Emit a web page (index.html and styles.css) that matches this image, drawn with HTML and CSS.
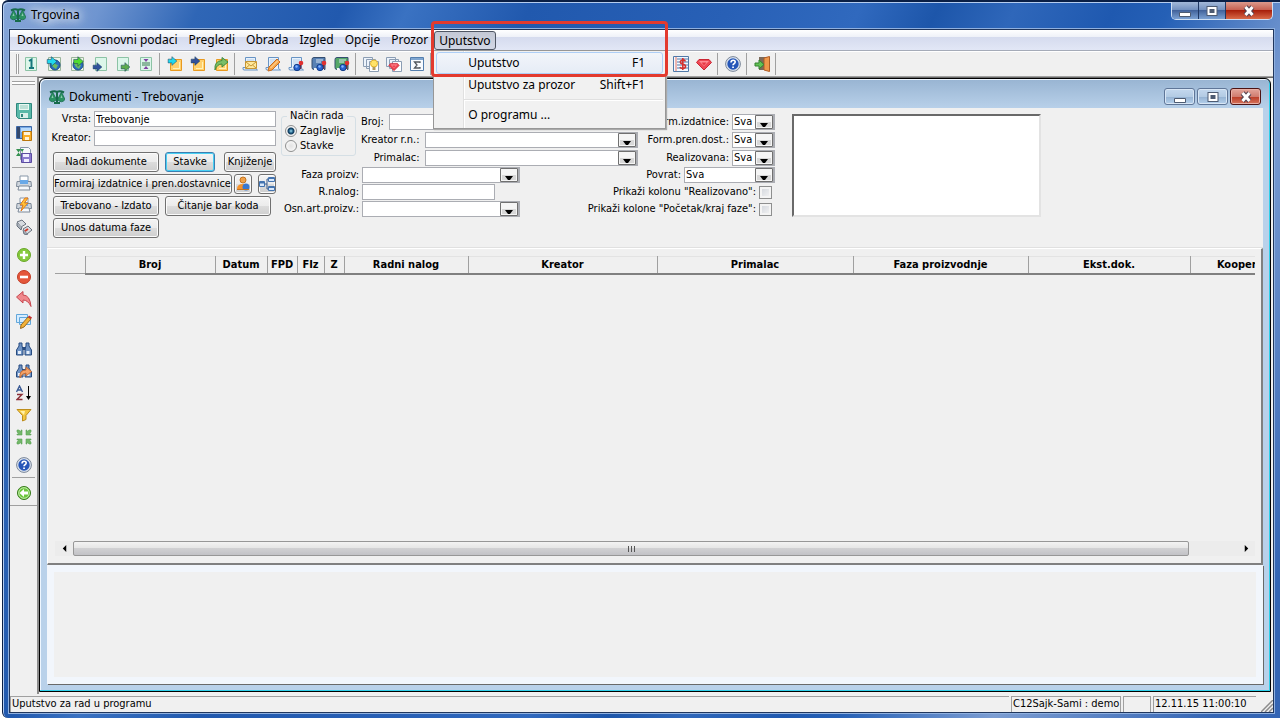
FILE: index.html
```html
<!DOCTYPE html>
<html lang="sr-Latn">
<head>
    <meta charset="UTF-8">
    <title>Trgovina</title>
    <link rel="stylesheet" href="styles.css">
</head>
<body>
<!-- shared icons -->
<svg class="defs" width="0" height="0">
    <symbol id="logo" viewBox="0 0 16 14">
        <path d="M1 2.500Q5 .5 8 2q3-1.500 7 .5M8 1v12M5 13h6" fill="none" stroke="#176b4b" stroke-width="2"/>
        <path d="M0 9.500L3.500 2L7.500 9.500Q3.500 14 0 9.500zM8.500 9.500L12.500 2L16 9.500Q12.500 14 8.500 9.500z" fill="#2a9262" stroke="#176b4b" stroke-width=".8"/>
        <path d="M3.500 5L2.500 8h2zM12.500 5L11.500 8h2z" fill="#8ccbb0"/>
    </symbol>
    <symbol id="floppy" viewBox="0 0 16 16">
        <path d="M.5 .5h15v15h-13l-2-2z" fill="#58b8a8" stroke="#31877e"/>
        <path d="M3 1h10v6H3z" fill="#e8f8f2"/><path d="M4 3h8M4 5h8" stroke="#8fc8bb"/>
        <path d="M4 10h8v5H4z" fill="#d9efea"/><path d="M5 11h2v3H5z" fill="#31877e"/>
    </symbol>
    <symbol id="page" viewBox="0 0 16 16">
        <path d="M2.500 1.500h11v13h-11z" fill="#effbf4" stroke="#8cc3a5"/>
        <path d="M3 2h10v12H3z" fill="#dcf6ea"/>
    </symbol>
    <symbol id="globe" viewBox="0 0 16 16">
        <path d="M2.500 1.500h12v13h-12z" fill="#edf5e8" stroke="#9cb59c"/>
        <circle cx="9" cy="9" r="5" fill="#2b6fc0" stroke="#194b86"/>
        <path d="M5 8q3-4 5-2l-1 2 3 1-2 4-3-2z" fill="#6cbc62"/>
    </symbol>
    <symbol id="right" viewBox="0 0 16 16">
        <path d="M1 5h6V1l8 7-8 7v-4H1z" fill="currentColor" stroke="#173c5c" stroke-width=".8"/>
    </symbol>
    <symbol id="note" viewBox="0 0 16 16">
        <path d="M3.500 3.500h11v11h-11z" fill="#ffd06c" stroke="#e89a20"/>
        <path d="M6 12.500h7M12.500 6v7" stroke="#fff1b8"/>
    </symbol>
    <symbol id="sheet" viewBox="0 0 16 16">
        <path d="M3.500 1.500h10v11l2 1.500H2Q.5 14 1 11.500h2.500z" fill="#e7f1fc" stroke="#6894c4"/>
        <path d="M5 4h7M5 6h7M5 8h5" stroke="#b4cfe9"/>
    </symbol>
    <symbol id="book" viewBox="0 0 16 16">
        <path d="M3 1.500h11v12H3q-2 0-2-2v-8q0-2 2-2z" fill="currentColor" stroke="#344e70"/>
        <path d="M3 12h10v2H3z" fill="#f2f5f7"/><path d="M5 4h7M5 6h5" stroke="#d8e4f0"/>
    </symbol>
    <symbol id="person" viewBox="0 0 16 16">
        <circle cx="13" cy="7" r="2.300" fill="#e03030"/><path d="M12.500 9v4" stroke="#902020" stroke-width="1.500"/>
        <circle cx="9" cy="11.500" r="3.200" fill="#2862cf" stroke="#143e88"/><circle cx="8.500" cy="10.500" r="1.200" fill="#86b8ff"/>
    </symbol>
    <symbol id="pencil" viewBox="0 0 16 16">
        <path d="M4 11L12 3l3 3-8 8-4 1z" fill="#f6a84c" stroke="#c96b1c"/><path d="M5.500 12L13 4.500" stroke="#ffe1ae"/>
    </symbol>
    <symbol id="pages" viewBox="0 0 16 16">
        <path d="M.5 1.500h9v9h-9zM3.500 3.500h9v9h-9z" fill="#edf3fb" stroke="#8b9db3"/>
        <path d="M6.500 5.500h9v10h-9z" fill="#fff" stroke="#8b9db3"/>
    </symbol>
    <symbol id="gem" viewBox="0 0 16 16">
        <path d="M3 3.500h10l2.500 3L8 14 .5 6.500z" fill="#ed4854" stroke="#cb2634"/>
        <path d="M3 5h10L8 10z" fill="#ff8d94"/><path d="M5.500 6.500h5L8 9.500z" fill="#e63844"/>
    </symbol>
    <symbol id="help" viewBox="0 0 16 16">
        <circle cx="8" cy="8" r="7.400" fill="#dce4ef" stroke="#7a8698"/>
        <circle cx="8" cy="8" r="5.700" fill="#2656b8"/>
        <path d="M6 6.500q0-2.300 2.200-2.300 2 0 2 1.800 0 1-1.200 1.700-1 .6-1 1.600" fill="none" stroke="#fff" stroke-width="1.600"/>
        <path d="M7.200 10.500h1.700v1.600H7.200z" fill="#fff"/>
    </symbol>
    <symbol id="printer" viewBox="0 0 16 16">
        <path d="M4 1h8v6H4z" fill="#fff" stroke="#8797a8"/>
        <path d="M1 6.500h14l.5 5h-15z" fill="#cfd6de" stroke="#7d8998"/>
        <path d="M4 5h8v4H4z" fill="#69a9e8"/><path d="M3 11h10l1 4H2z" fill="#f5f8fb" stroke="#7d8998"/>
    </symbol>
    <symbol id="binoculars" viewBox="0 0 16 16">
        <path d="M3 2h3v3l1 3v6H.5V9L3 5zM10 2h3v3l2.500 4v5H9V8l1-3z" fill="#6f93c4" stroke="#274b80"/>
        <path d="M6.500 6h3v3h-3z" fill="#274b80"/><path d="M2 10h3v3H2zM10.500 10h3v3h-3z" fill="#e4eefb"/>
    </symbol>
    <symbol id="glyph-min" viewBox="0 0 14 12">
        <path d="M1.500 7.500h11v4h-11z" fill="#fff" stroke="#4d5b72"/>
    </symbol>
    <symbol id="glyph-max" viewBox="0 0 14 12">
        <path d="M2.500 2h9v8h-9z" fill="#4d5b72" stroke="#4d5b72" stroke-width="2"/>
        <path d="M3.500 3h7v6h-7z" fill="none" stroke="#fff" stroke-width="2"/>
    </symbol>
    <symbol id="glyph-close" viewBox="0 0 14 12">
        <path d="M3.500 2l7 8M10.500 2l-7 8" stroke="#54414e" stroke-width="5"/>
        <path d="M3.500 2l7 8M10.500 2l-7 8" stroke="#fff" stroke-width="3"/>
    </symbol>
</svg>

<div class="window">
    <header class="titlebar">
        <svg class="logo"><use href="#logo"/></svg>
        <h1>Trgovina</h1>
        <div class="winbuttons">
            <button aria-label="Minimize"><svg><use href="#glyph-min"/></svg></button>
            <button aria-label="Maximize"><svg><use href="#glyph-max"/></svg></button>
            <button class="close" aria-label="Close"><svg><use href="#glyph-close"/></svg></button>
        </div>
    </header>

    <div class="client">
        <nav class="menubar">
            <button>Dokumenti</button>
            <button>Osnovni podaci</button>
            <button>Pregledi</button>
            <button>Obrada</button>
            <button>Izgled</button>
            <button>Opcije</button>
            <button>Prozor</button>
            <div class="menu-open">
                <button class="active">Uputstvo</button>
                <div class="dropdown">
                    <button class="hot"><span>Uputstvo</span><span>F1</span></button>
                    <button><span>Uputstvo za prozor</span><span>Shift+F1</span></button>
                    <hr>
                    <button><span>O programu ...</span></button>
                </div>
                <div class="marker"></div>
            </div>
        </nav>

        <div class="toolbar">
            <div class="grip"></div>
            <div class="group">
                <button><svg viewBox="0 0 16 16"><use href="#page"/><path d="M6 5l2.500-1.500V12M6 12h5" fill="none" stroke="#17787c" stroke-width="2"/></svg></button>
                <button><svg viewBox="0 0 16 16"><use href="#globe"/><use href="#right" width="12" height="11" color="#20d8ee"/></svg></button>
                <button><svg viewBox="0 0 16 16"><use href="#globe"/><use href="#right" x="3" width="13" height="11" color="#50dc30"/></svg></button>
                <button><svg viewBox="0 0 16 16"><use href="#page" x="1"/><use href="#right" y="6" width="11" height="10" color="#31519c"/></svg></button>
                <button><svg viewBox="0 0 16 16"><use href="#page"/><use href="#right" x="5" y="6" width="11" height="10" color="#5cab4d"/></svg></button>
                <button><svg viewBox="0 0 16 16"><use href="#page"/><path d="M4 7h8M4 9h8" stroke="#397b50"/><path d="M5.500 3h5L8 6zM5.500 13h5L8 10z" fill="#8243a4"/></svg></button>
            </div>
            <div class="group">
                <button><svg viewBox="0 0 16 16"><use href="#note"/><use href="#right" width="11" height="10" color="#20d8ee"/></svg></button>
                <button><svg viewBox="0 0 16 16"><use href="#note"/><use href="#right" width="11" height="10" color="#31519c"/></svg></button>
                <button><svg viewBox="0 0 16 16"><use href="#note"/><path d="M2 14Q1 5 9 4.500V1.500L15 6l-6 5V8Q4 8 2 14z" fill="#7abf68" stroke="#438a3c"/></svg></button>
            </div>
            <div class="group">
                <button><svg viewBox="0 0 16 16"><use href="#sheet"/><path d="M3.500 5.500h11v7h-11z" fill="#ffe99c" stroke="#c79735"/><path d="M4 6l5 4 5-4M4 12l3.500-3M14 12l-3.500-3" fill="none" stroke="#c79735"/></svg></button>
                <button><svg viewBox="0 0 16 16"><use href="#sheet"/><use href="#pencil"/></svg></button>
                <button><svg viewBox="0 0 16 16"><use href="#sheet"/><use href="#person"/></svg></button>
                <button><svg viewBox="0 0 16 16"><use href="#book" color="#5881b4"/><use href="#person"/></svg></button>
                <button><svg viewBox="0 0 16 16"><use href="#book" color="#54a768"/><use href="#person"/></svg></button>
            </div>
            <div class="group">
                <button><svg viewBox="0 0 16 16"><use href="#pages"/><circle cx="11" cy="7.500" r="3.500" fill="#ffe368" stroke="#e2b22c"/><path d="M9.500 11h3v3h-3z" fill="#b09a60"/></svg></button>
                <button><svg viewBox="0 0 16 16"><use href="#pages"/><use href="#gem" x="2" y="5" width="12" height="11"/></svg></button>
                <button><svg viewBox="0 0 16 16"><path d="M1.500 1.500h13v13h-13z" fill="#f8fbff" stroke="#557fae"/><path d="M2 2h12v2H2z" fill="#7fa6d0"/><path d="M11 7V6H5.500L8 9l-2.500 3H11v-1" fill="none" stroke="#52585f" stroke-width="1.300"/></svg></button>
            </div>
            <div class="group far">
                <button><svg viewBox="0 0 16 16"><path d="M1 8l7-6 7.500 6L8 14z" fill="#7444c4"/></svg></button>
                <button><svg viewBox="0 0 16 16"><path d="M.5 .5h15v15H.5z" fill="#f3f8ff" stroke="#5079a8"/><path d="M4 3h11M4 6h11M4 9h11M4 12h11" stroke="#5079a8"/><path d="M3 1v14" stroke="#e47060"/><path d="M12.500 5.500q-1-2-3-1.500-2.500.5-2 2.500 0 1 2 1.500 3 .5 3 2.500t-3 2q-2 0-2.500-1.500M9.800 2v12" fill="none" stroke="#d6302c" stroke-width="1.600"/></svg></button>
                <button><svg viewBox="0 0 16 16"><use href="#gem"/></svg></button>
            </div>
            <div class="group">
                <button><svg viewBox="0 0 16 16"><use href="#help"/></svg></button>
            </div>
            <div class="group">
                <button><svg viewBox="0 0 16 16"><path d="M5 1h10v13H5z" fill="#7c6a5a"/><path d="M10 2l5.500-1.500v15L10 14z" fill="#f0974a" stroke="#b05c24"/><path d="M1 7h4V4l5 4.500L5 13v-3H1z" fill="#62c254" stroke="#358030"/></svg></button>
            </div>
        </div>

        <main class="workspace">
            <aside class="sidebar">
                <div class="hgrip"></div>
                <div class="vgroup tight">
                    <button><svg viewBox="0 0 16 16"><use href="#floppy"/></svg></button>
                    <button><svg viewBox="0 0 16 16"><path d="M.5 1.500h15v12H.5z" fill="#76a9e6" stroke="#3d69a8"/><path d="M1 2h3v11H1z" fill="#33486c"/><path d="M5 3h10v4H5z" fill="#b8dafb"/><path d="M6.500 6.500h9v9h-9z" fill="#f9ae28" stroke="#b9760e"/><path d="M8 7h6v3H8zM9 12h4v3H9z" fill="#fff4d8"/></svg></button>
                    <button><svg viewBox="0 0 16 16"><path d="M4.500 .5h8l2 2v10h-10z" fill="#f6f9fb" stroke="#8795aa"/><path d="M0 2h4l5 7H5zM8 2H5L0 9h4z" fill="#359151"/><path d="M5.500 6.500h10v9h-10z" fill="#8a7bcf" stroke="#5b4ca0"/><path d="M7 7h6v3H7zM8 12h5v3H8z" fill="#f0eeff"/></svg></button>
                </div>
                <div class="vgroup line">
                    <button><svg viewBox="0 0 16 16"><use href="#printer"/></svg></button>
                    <button><svg viewBox="0 0 16 16"><use href="#printer"/><path d="M9 1L4 8h3l-2 6 7-8H8.500L12 1z" fill="#ffc33a" stroke="#e2791c"/></svg></button>
                    <button><svg viewBox="0 0 16 16"><path d="M1 3l5-2 4 4-5 3zM7 10l5-3 4 4-5 4z" fill="#d7dbe0" stroke="#69727e"/><path d="M1 4v3l4 4 1-3M7 11l1 4 4 1" fill="#a9b0b9" stroke="#69727e"/><path d="M9 12l3-2" stroke="#d63828" stroke-width="2"/></svg></button>
                </div>
                <div class="vgroup">
                    <button><svg viewBox="0 0 16 16"><circle cx="8" cy="8" r="6.500" fill="#85c93c" stroke="#6aa82a"/><path d="M8 4v8M4 8h8" stroke="#fff" stroke-width="2.400"/></svg></button>
                    <button><svg viewBox="0 0 16 16"><circle cx="8" cy="8" r="6.500" fill="#e4573b" stroke="#c23c25"/><path d="M4 8h8" stroke="#fff" stroke-width="2.600"/></svg></button>
                    <button><svg viewBox="0 0 16 16"><path d="M.5 6L7 .5V4q7 0 8 11.500Q12 9 7 9v3z" fill="#f0888c" stroke="#c7474f"/></svg></button>
                    <button><svg viewBox="0 0 16 16"><path d="M.5 1.500h11v8H.5zM3.500 4.500h11v7h-11z" fill="#d5ecff" stroke="#62a7da"/><path d="M5 12l7-8 3 2-7 8-3.500 1.500z" fill="#f3b238" stroke="#9a681c"/><path d="M12 4l1-1.500 3 2-1 1.500z" fill="#c62c30"/></svg></button>
                </div>
                <div class="vgroup">
                    <button><svg viewBox="0 0 16 16"><use href="#binoculars"/></svg></button>
                    <button><svg viewBox="0 0 16 16"><use href="#binoculars"/><path d="M4 15Q3 7 10 7V4l5.500 4.500L10 13v-3q-4 0-6 5z" fill="#f5a368" stroke="#c76c32"/></svg></button>
                    <button><svg viewBox="0 0 16 16"><path d="M.5 7L3.500 1l3 6M1.500 5h4" fill="none" stroke="#3a5a94" stroke-width="1.400"/><path d="M1 9.500h5L1 14.500h5.500" fill="none" stroke="#8c3038" stroke-width="1.400"/><path d="M12.500 1v11" stroke="#000"/><path d="M10 11h5l-2.500 4z"/></svg></button>
                    <button><svg viewBox="0 0 16 16"><path d="M1 2.500h14L10 8.500v4L6.500 14V8.500z" fill="#f2c63e" stroke="#bd8d1c"/><path d="M4 4h5L8 8z" fill="#fff0a8"/></svg></button>
                    <button><svg viewBox="0 0 16 16"><path d="M1 1h2l2 2V1h1v5H1V5h2L1 3zM15 1h-2l-2 2V1h-1v5h5V5h-2l2-2zM1 15h2l2-2v2h1v-5H1v1h2l-2 2zM15 15h-2l-2-2v2h-1v-5h5v1h-2l2 2z" fill="#72b868" stroke="#5ca255" stroke-width=".6"/></svg></button>
                </div>
                <div class="vgroup tight">
                    <button><svg viewBox="0 0 16 16"><use href="#help"/></svg></button>
                </div>
                <div class="vgroup line">
                    <button><svg viewBox="0 0 16 16"><circle cx="8" cy="8" r="6.500" fill="#6cc63c" stroke="#37791c"/><circle cx="8" cy="8" r="5.300" fill="none" stroke="#c4ecb0"/><path d="M3.500 8L8 4v2.500h4v3H8V12z" fill="#fff"/></svg></button>
                </div>
                <hr>
            </aside>

            <section class="mdi">
                <div class="child">
                    <header class="childbar">
                        <svg class="logo"><use href="#logo"/></svg>
                        <h2>Dokumenti - Trebovanje</h2>
                        <div class="childbuttons">
                            <button aria-label="Minimize"><svg><use href="#glyph-min"/></svg></button>
                            <button aria-label="Maximize"><svg><use href="#glyph-max"/></svg></button>
                            <button class="close" aria-label="Close"><svg><use href="#glyph-close"/></svg></button>
                        </div>
                    </header>

                    <form class="filters">
                        <div class="documents">
                            <div class="field"><label for="vrsta">Vrsta:</label><input type="text" id="vrsta" value="Trebovanje"></div>
                            <div class="field"><label for="kreator">Kreator:</label><input type="text" id="kreator"></div>
                            <div class="actions">
                                <div class="action-row">
                                    <button type="button" class="btn wide">Nađi dokumente</button>
                                    <button type="button" class="btn default">Stavke</button>
                                    <button type="button" class="btn last">Knjiženje</button>
                                </div>
                                <div class="action-row">
                                    <button type="button" class="btn full">Formiraj izdatnice i pren.dostavnice</button>
                                    <button type="button" class="btn icon" aria-label="Korisnik"><svg viewBox="0 0 16 16"><circle cx="8" cy="4" r="3" fill="#f0a24a" stroke="#c47420"/><path d="M2 13q0-5 6-5 5 0 6 5z" fill="#f5932c"/><circle cx="11" cy="11" r="3.500" fill="#3978d0"/><path d="M2 13.500h12" stroke="#c47420"/></svg></button>
                                    <button type="button" class="btn icon last" aria-label="Struktura"><svg viewBox="0 0 16 16"><path d="M4 8h4M8 3v10M8 3h2M8 13h2" fill="none" stroke="#3b5c8c"/><path d="M.5 5.500h5v5h-5zM9.500 1.500h6v4h-6zM9.500 10.500h6v4h-6z" fill="#d8e8fb" stroke="#4474b0"/><path d="M1 6h4v1.500H1zM10 2h5v1h-5zM10 11h5v1h-5z" fill="#4474b0"/></svg></button>
                                </div>
                                <div class="action-row">
                                    <button type="button" class="btn wide">Trebovano - Izdato</button>
                                    <button type="button" class="btn wide">Čitanje bar koda</button>
                                </div>
                                <div class="action-row">
                                    <button type="button" class="btn wide">Unos datuma faze</button>
                                </div>
                            </div>
                        </div>

                        <div class="search">
                            <div class="upper">
                                <fieldset>
                                    <legend>Način rada</legend>
                                    <label><input type="radio" name="rad" checked>Zaglavlje</label>
                                    <label><input type="radio" name="rad">Stavke</label>
                                </fieldset>
                                <div class="rows people">
                                    <div class="field number"><label for="broj">Broj:</label><input type="text" id="broj"></div>
                                    <div class="field"><label for="kreatorrn">Kreator r.n.:</label><select id="kreatorrn"><option></option></select></div>
                                    <div class="field"><label for="primalac">Primalac:</label><select id="primalac"><option></option></select></div>
                                </div>
                                <div class="rows state">
                                    <div class="field"><label for="izdatnice">Form.izdatnice:</label><select id="izdatnice"><option>Sva</option></select></div>
                                    <div class="field"><label for="prendost">Form.pren.dost.:</label><select id="prendost"><option>Sva</option></select></div>
                                    <div class="field"><label for="realizovana">Realizovana:</label><select id="realizovana"><option>Sva</option></select></div>
                                </div>
                            </div>
                            <div class="lower">
                                <div class="rows phase">
                                    <div class="field"><label for="faza">Faza proizv:</label><select id="faza"><option></option></select></div>
                                    <div class="field"><label for="nalog">R.nalog:</label><input type="text" id="nalog"></div>
                                    <div class="field"><label for="osnart">Osn.art.proizv.:</label><select id="osnart"><option></option></select></div>
                                </div>
                                <div class="rows state">
                                    <div class="field"><label for="povrat">Povrat:</label><select id="povrat" class="medium"><option>Sva</option></select></div>
                                    <div class="field"><label for="kolreal">Prikaži kolonu "Realizovano":</label><input type="checkbox" id="kolreal"></div>
                                    <div class="field"><label for="kolfaze">Prikaži kolone "Početak/kraj faze":</label><input type="checkbox" id="kolfaze"></div>
                                </div>
                            </div>
                        </div>

                        <textarea class="notes" aria-label="Napomena"></textarea>
                    </form>

                    <div class="grid-panel">
                        <div class="grid-view">
                            <table>
                                <colgroup>
                                    <col class="c-mark"><col class="c-broj"><col class="c-datum"><col class="c-fpd"><col class="c-fiz"><col class="c-z">
                                    <col class="c-nalog"><col class="c-kreator"><col class="c-primalac"><col class="c-faza"><col class="c-ekst"><col class="c-koop">
                                </colgroup>
                                <thead>
                                <tr>
                                    <th></th><th>Broj</th><th>Datum</th><th>FPD</th><th>FIz</th><th>Z</th>
                                    <th>Radni nalog</th><th>Kreator</th><th>Primalac</th><th>Faza proizvodnje</th><th>Ekst.dok.</th><th>Kooperant</th>
                                </tr>
                                </thead>
                            </table>
                        </div>
                        <div class="scrollbar">
                            <button aria-label="Levo"><svg viewBox="0 0 8 8"><path d="M6 0v8L2 4z"/></svg></button>
                            <div class="thumb"><i></i><i></i><i></i></div>
                            <button aria-label="Desno"><svg viewBox="0 0 8 8"><path d="M2 0v8l4-4z"/></svg></button>
                        </div>
                    </div>

                    <div class="detail"></div>
                </div>
            </section>
        </main>

        <footer class="status">
            <span class="message">Uputstvo za rad u programu</span>
            <span class="user">C12Sajk-Sami : demo</span>
            <span class="blank"></span>
            <span class="clock">12.11.15 11:00:10</span>
            <svg class="sizer" viewBox="0 0 12 12"><path d="M0 12L12 0M4 12l8-8M8 12l4-4" stroke="#8c8c8c" stroke-width="1.500"/></svg>
        </footer>
    </div>
</div>
</body>
</html>
```

FILE: styles.css
```css
*{
    box-sizing: border-box;
}
body{
    margin: 0;
    height: 100vh;
    background: #fff;
    color: #000;
    font: 11px/14px "DejaVu Sans Condensed", "Noto Sans", sans-serif;
    overflow: hidden;
}
button, input, select, textarea{
    font: inherit;
    color: inherit;
    margin: 0;
    padding: 0;
}
button{
    border: 0;
    background: none;
    white-space: nowrap;
}
h1, h2{
    margin: 0;
    font: 12px/16px "Noto Sans", "Open Sans", sans-serif;
}
.defs{
    position: absolute;
}

/* main window */
.window{
    display: flex;
    flex-direction: column;
    height: 100vh;
    margin-left: 2px;
    padding: 0 6px 5px 6px;
    border-left: 1px solid #0a1f45;
    border-top: 2px solid #0a1f45;
    border-radius: 6px 0 0 6px;
    background: linear-gradient(115deg, #86a6d8 0, #6f95d0 90px, #2f66b6 180px, #2159ae 310px, #3a72c2 370px, #2159ae 480px, #2860b6 660px, #3069be 780px, #1d56aa 850px, #2f67ba 920px, #1f59b0 1010px, #2560b6 1060px, #7c9dd2 1200px, #3465b4 1400px);
    box-shadow: inset 1px 1px 0 #b5cdf0;
}
.titlebar{
    display: flex;
    flex: none;
    height: 27px;
}
.logo{
    width: 16px;
    height: 14px;
    margin: 6px 5px 0 1px;
}
.titlebar h1{
    margin-top: 5px;
    text-shadow: 0 0 8px #fff, 0 0 12px #fff, 0 0 16px #fff;
}
.winbuttons{
    display: flex;
    height: 18px;
    margin: 0 1px 0 auto;
    border: 1px solid #cfdff3;
    border-top: 0;
    border-radius: 0 0 5px 5px;
    overflow: hidden;
}
.winbuttons button{
    width: 27px;
    border-right: 1px solid #1f3864;
    background: linear-gradient(#a3b9d9, #6e8dbd 50%, #42639b 50%, #7ba1d3);
}
.winbuttons .close{
    width: 46px;
    border: 0;
    background: linear-gradient(#dc9a8c, #c55c4c 50%, #a8200c 50%, #d96a48);
}
.winbuttons svg, .childbuttons svg{
    display: block;
    width: 14px;
    height: 12px;
    margin: 0 auto;
}
.client{
    display: flex;
    flex-direction: column;
    flex: 1;
    min-height: 0;
    border: 1px solid #20365d;
    box-shadow: 0 0 0 1px #8fb0df;
    background: #f0f0f0;
}

/* menu */
.menubar{
    display: flex;
    flex: none;
    gap: 1px;
    height: 21px;
    padding-left: 2px;
    background: linear-gradient(#fff, #eef1f8 35%, #d5dbee 35%, #e2e7f6);
    border-bottom: 1px solid #a5abb8;
    font: 12px/16px "Noto Sans", "Open Sans", sans-serif;
}
.menubar > button{
    padding: 0 5px;
}
.menu-open{
    position: relative;
}
.menu-open .active{
    height: 19px;
    margin-top: 1px;
    padding: 0 4px;
    border: 1px solid #4f5663;
    border-radius: 3px;
    background: linear-gradient(#c3c8d4, #d3d8e6);
}
.dropdown{
    position: absolute;
    z-index: 5;
    top: 20px;
    left: -1px;
    width: 233px;
    padding: 1px 2px 2px;
    border: 1px solid #979797;
    background: linear-gradient(90deg, transparent 29px, #e0e0e0 29px, #e0e0e0 30px, #fff 30px, #fff 31px, transparent 31px) #f1f1f1;
    box-shadow: 1px 1px 1px #aaa;
}
.dropdown button{
    display: flex;
    justify-content: space-between;
    width: 100%;
    height: 22px;
    padding: 2px 17px 2px 31px;
    border: 1px solid transparent;
}
.dropdown .hot{
    border-color: #aecff7;
    border-radius: 3px;
    background: linear-gradient(#f2f5fa, #e6ecf6);
}
.dropdown hr{
    margin: 3px 0 3px 28px;
    border: 0;
    border-top: 1px solid #e0e0e0;
    border-bottom: 1px solid #fff;
}
.marker{
    position: absolute;
    z-index: 6;
    top: -9px;
    left: -3px;
    width: 237px;
    height: 56px;
    border: 3px solid #e33a2e;
    border-radius: 4px;
    pointer-events: none;
}

/* toolbars */
.toolbar{
    display: flex;
    flex: none;
    align-items: center;
    height: 26px;
    padding-left: 6px;
    border-top: 1px solid #fff;
    border-bottom: 1px solid #a0a0a0;
}
.grip{
    width: 3px;
    height: 20px;
    border: 1px solid #a0a0a0;
    border-width: 0 1px;
    background: #fff;
}
.group{
    display: flex;
    height: 22px;
    padding-right: 2px;
    border-right: 1px solid #a0a0a0;
    margin-right: 3px;
}
.group button{
    width: 23px;
}
.group svg, .vgroup svg, .icon svg{
    display: block;
    width: 16px;
    height: 16px;
    margin: 0 auto;
}
.far{
    margin-left: 212px;
}
.workspace{
    display: flex;
    flex: 1;
    min-height: 0;
}
.sidebar{
    flex: none;
    width: 27px;
    padding-top: 4px;
}
.hgrip{
    height: 4px;
    margin: 0 2px 15px;
    border: 1px solid #a0a0a0;
    border-width: 1px 0;
    background: #fff;
}
.vgroup{
    padding-bottom: 6px;
}
.vgroup button{
    display: block;
    width: 100%;
    height: 22px;
}
.line{
    margin: 0 2px;
    padding-top: 4px;
    border-top: 1px solid #a0a0a0;
}
.tight{
    padding-bottom: 1px;
}
.line:last-of-type{
    padding-bottom: 1px;
}
.sidebar hr{
    margin: 0;
    border: 0;
    border-top: 1px solid #a0a0a0;
}

/* document window */
.mdi{
    display: flex;
    flex: 1;
    min-width: 0;
    padding-right: 2px;
    padding-bottom: 2px;
    border-left: 2px solid #8c8c8c;
    border-top: 1px solid #696969;
    background: #f0f0f0;
}
.child{
    display: flex;
    flex-direction: column;
    flex: 1;
    min-width: 0;
    padding: 0 7px 7px 7px;
    border: 1px solid #000;
    border-radius: 6px 6px 0 0;
    background: linear-gradient(#98b4d2, #b9d1ea 30px);
    box-shadow: inset -1px -1px 0 #2fd0ea, inset 1px 1px 0 #eef6ff;
}
.childbar{
    display: flex;
    flex: none;
    height: 29px;
}
.childbar .logo{
    margin: 11px 4px 0 2px;
}
.childbar h2{
    margin-top: 10px;
}
.childbuttons{
    display: flex;
    gap: 2px;
    height: 17px;
    margin: 9px 2px 0 auto;
}
.childbuttons button{
    width: 31px;
    border: 1px solid #5f7698;
    border-radius: 3px;
    background: linear-gradient(#c4d8ee, #b3cbe4 50%, #94b1d1 50%, #b4d0ec);
    box-shadow: inset 0 0 0 1px #d8e6f5;
}
.childbuttons .close{
    border-color: #4d1313;
    background: linear-gradient(#e3a69b, #d17d70 50%, #b93a25 50%, #d6745c);
    box-shadow: inset 0 0 0 1px #e9b0a6;
}

/* filter form */
.filters{
    display: flex;
    flex: none;
    height: 140px;
    padding: 3px 0 0 4px;
    background: #f0f0f0;
}
.field{
    display: flex;
    align-items: center;
    justify-content: flex-end;
    gap: 3px;
    height: 16px;
    white-space: nowrap;
}
input[type=text], select{
    height: 16px;
    padding-left: 1px;
    border: 2px solid #abadb3;
    border-width: 1px 2px 1px 1px;
    border-radius: 0;
    background: #fff;
}
input[type=text]{
    border-width: 1px;
}
select{
    appearance: none;
    width: 43px;
    background: #fff url('data:image/svg+xml,<svg xmlns="http://www.w3.org/2000/svg" width="18" height="14"><path d="M.5 .5h17v13H.5z" fill="rgb(245,245,245)" stroke="rgb(112,112,112)"/><path d="M2 7h14v5H2z" fill="rgb(216,216,216)"/><path d="M5 8h8l-3 4H8z"/></svg>') no-repeat right top;
}
.documents{
    width: 225px;
}
.documents .field{
    margin-bottom: 3px;
}
.documents input{
    width: 182px;
}
.actions{
    display: flex;
    flex-direction: column;
    gap: 2px;
    margin-top: 6px;
    padding-left: 2px;
}
.action-row{
    display: flex;
    gap: 6px;
    height: 20px;
}
.btn{
    border: 1px solid #707070;
    border-radius: 3px;
    background: linear-gradient(#f4f4f4, #ebebeb 50%, #dcdcdc 50%, #cfcfcf);
    box-shadow: inset 0 0 0 1px #fbfbfb;
}
.wide{
    width: 106px;
}
.default{
    width: 50px;
    border-color: #3c7fb1;
    box-shadow: inset 0 0 0 1px #48d0f4;
}
.last{
    width: 52px;
    margin-left: auto;
}
.full{
    width: 180px;
}
.icon{
    width: 18px;
}
.icon:not(.last){
    margin-left: -4px;
}
.search{
    display: flex;
    flex-direction: column;
    gap: 1px;
    width: 499px;
    margin-left: 4px;
    padding-top: 3px;
}
.upper, .lower{
    display: flex;
    justify-content: space-between;
}
.rows{
    display: flex;
    flex-direction: column;
    gap: 2px;
}
.lower .rows{
    gap: 1px;
}
fieldset{
    width: 75px;
    height: 46px;
    min-width: 0;
    margin: -4px 0 0 1px;
    padding: 1px 0 0 3px;
    border: 1px solid #d5dfe5;
    border-radius: 3px;
}
legend{
    margin-left: 2px;
    padding: 0 3px;
    line-height: 12px;
}
fieldset label{
    display: flex;
    align-items: center;
    gap: 3px;
    height: 15px;
}
input[type=radio]{
    appearance: none;
    width: 12px;
    height: 12px;
    border: 1px solid #8e8f8f;
    border-radius: 50%;
    background: radial-gradient(#e2e2e2, #fff);
}
input[type=radio]:checked{
    background: radial-gradient(circle at 50% 50%, #9fe0f4 0, #1d5a82 2px, #123a5a 3px, #f4f4f4 4px);
}
.people{
    margin-left: 5px;
    margin-right: auto;
}
.people .field{
    gap: 5px;
}
.people select{
    width: 213px;
}
.people .number{
    justify-content: flex-start;
}
.number input{
    width: 120px;
}
.phase{
    width: 240px;
}
.phase .field{
    display: grid;
    grid-template-columns: 79px auto;
    justify-content: start;
}
.phase label{
    text-align: right;
}
.phase select{
    width: 158px;
}
.phase input{
    width: 133px;
}
.medium{
    width: 91px;
}
input[type=checkbox]{
    appearance: none;
    width: 13px;
    height: 13px;
    margin-right: 3px;
    border: 1px solid #8e8f8f;
    background: linear-gradient(135deg, #cfd3da, #f6f6f6);
    box-shadow: inset 0 0 0 2px #f4f4f4;
}
.state{
    margin-right: 4px;
}
.notes{
    width: 249px;
    height: 103px;
    margin: 3px 0 0 13px;
    border: 2px solid #696969;
    border-color: #696969 #e3e3e3 #e3e3e3 #696969;
    background: #fff;
    resize: none;
}

/* table */
.grid-panel{
    display: flex;
    flex-direction: column;
    flex: 1;
    min-height: 0;
    padding: 7px 6px 7px 7px;
    border: 1px solid #fff;
    border-right: 2px solid #808080;
    border-bottom: 2px solid #808080;
    background: #f0f0f0;
    box-shadow: 0 -1px 0 #e0e0e0;
}
.grid-view{
    flex: 1;
    overflow: hidden;
}
table{
    table-layout: fixed;
    width: 1247px;
    border-collapse: collapse;
}
th{
    height: 17px;
    padding: 0;
    border-top: 1px solid #e3e3e3;
    border-right: 1px solid #a0a0a0;
    border-bottom: 2px solid #808080;
    text-align: center;
    white-space: nowrap;
    line-height: 13px;
}
th:first-child{
    border-top-color: transparent;
    border-bottom: 1px solid #a0a0a0;
}
.c-mark{ width: 30px; }
.c-broj{ width: 130px; }
.c-datum{ width: 52px; }
.c-fpd{ width: 30px; }
.c-fiz{ width: 27px; }
.c-z{ width: 20px; }
.c-nalog{ width: 124px; }
.c-kreator{ width: 189px; }
.c-primalac{ width: 196px; }
.c-faza{ width: 175px; }
.c-ekst{ width: 162px; }
.c-koop{ width: 112px; }
.scrollbar{
    display: flex;
    flex: none;
    height: 15px;
    background: #ececec;
}
.scrollbar button{
    width: 18px;
}
.scrollbar button:last-child{
    margin-left: auto;
}
.scrollbar svg{
    display: block;
    width: 7px;
    height: 7px;
    margin: 0 auto;
}
.thumb{
    display: flex;
    align-items: center;
    justify-content: center;
    gap: 2px;
    width: 93%;
    border: 1px solid #979797;
    border-radius: 2px;
    background: linear-gradient(#f3f3f3, #e6e6e6 45%, #d2d2d4 45%, #c2c2c6);
}
.thumb i{
    width: 1px;
    height: 6px;
    background: #555;
}
.detail{
    flex: none;
    height: 119px;
    border: 7px solid #f2f6fc;
    background: #f0f0f0;
    box-shadow: 1px 1px 0 #696969;
}

/* status bar */
.status{
    display: flex;
    flex: none;
    gap: 2px;
    height: 18px;
    padding-top: 2px;
    background: #f0f0f0;
}
.status span{
    border-top: 1px solid #a0a0a0;
    border-left: 1px solid #a0a0a0;
    border-right: 1px solid #a0a0a0;
    padding-left: 1px;
    white-space: nowrap;
}
.status .message{
    flex: 1;
    border-right: 0;
}
.user{
    width: 110px;
}
.blank{
    width: 28px;
}
.status .clock{
    width: 103px;
    border-right: 0;
}
.sizer{
    align-self: flex-end;
    width: 12px;
    height: 12px;
    margin-left: 3px;
}
```
